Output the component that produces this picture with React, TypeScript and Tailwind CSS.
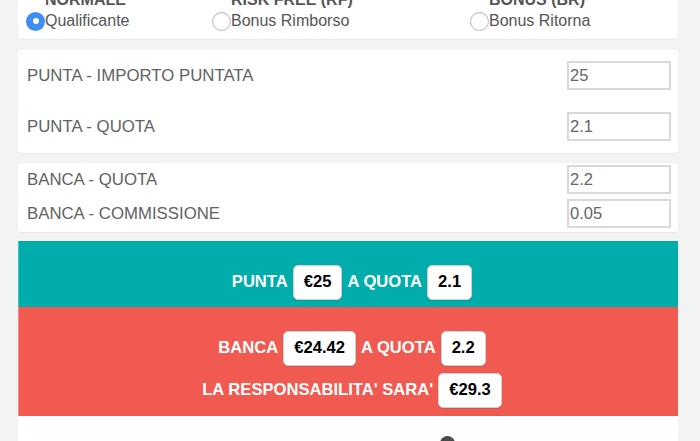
import React from "react";

const FONT = "font-['Liberation_Sans',Arial,sans-serif]";

function Radio({ checked = false }: { checked?: boolean }) {
  if (checked) {
    return (
      <span className="flex h-[19px] w-[19px] shrink-0 items-center justify-center rounded-full bg-[#3d8ef3]">
        <span className="h-[6px] w-[6px] rounded-full bg-white" />
      </span>
    );
  }
  return (
    <span className="h-[19px] w-[19px] shrink-0 rounded-full border border-[#b9b9b9] bg-white shadow-[inset_0_1px_1px_rgba(0,0,0,0.08)]" />
  );
}

const MODES = [
  { title: "NORMALE", label: "Qualificante", checked: true, w: "w-[186px]" },
  { title: "RISK FREE (RF)", label: "Bonus Rimborso", checked: false, w: "w-[258px]" },
  { title: "BONUS (BR)", label: "Bonus Ritorna", checked: false, w: "flex-1" },
];

function Field({ label, value }: { label: string; value: string }) {
  return (
    <div className="flex items-center justify-between">
      <span className="text-[16.8px] leading-[20px] text-[#626262]">{label}</span>
      <input
        readOnly
        value={value}
        className="h-[29px] w-[104px] border-2 border-[#d9d9d9] bg-white pl-[1px] text-[16.5px] text-[#666] outline-none"
      />
    </div>
  );
}

function Badge({ children }: { children: React.ReactNode }) {
  return (
    <span className="inline-flex h-[35px] items-center rounded-[5px] border border-[#c9d0d4] bg-white px-[10px] text-[16.6px] font-bold text-black shadow-[0_1px_1px_rgba(0,0,0,0.1)]">
      {children}
    </span>
  );
}

export default function App() {
  return (
    <div className={`h-[441px] overflow-hidden bg-[#f2f3f3] ${FONT}`}>
      <div className="ml-[18px] w-[660px]">
        {/* mode selection */}
        <div className="-mt-[14px] flex rounded-[3px] bg-white pt-[4px] pb-[8px] shadow-[0_1px_1px_rgba(0,0,0,0.04)]">
          {MODES.map((m) => (
            <div key={m.title} className={`${m.w} pl-[8px]`}>
              <div className="pl-[19px] text-[16px] font-bold leading-[20px] text-[#555]">{m.title}</div>
              <div className="mt-[1px] flex h-[20px] items-center">
                <Radio checked={m.checked} />
                <span className="text-[16px] leading-[20px] text-[#555]">{m.label}</span>
              </div>
            </div>
          ))}
        </div>

        {/* punta */}
        <div className="mt-[11px] flex flex-col gap-[22px] rounded-[3px] bg-white pt-[11px] pb-[12px] pl-[9px] pr-[7px] shadow-[0_1px_1px_rgba(0,0,0,0.04)]">
          <Field label="PUNTA - IMPORTO PUNTATA" value="25" />
          <Field label="PUNTA - QUOTA" value="2.1" />
        </div>

        {/* banca */}
        <div className="mt-[10px] flex flex-col gap-[5px] rounded-[3px] bg-white pt-[2px] pb-[4px] pl-[9px] pr-[7px] shadow-[0_1px_1px_rgba(0,0,0,0.04)]">
          <Field label="BANCA - QUOTA" value="2.2" />
          <Field label="BANCA - COMMISSIONE" value="0.05" />
        </div>

        {/* risultato */}
        <div className="mt-[9px] rounded-t-[3px] bg-white">
          <div className="flex flex-col items-center gap-[7px] border-l border-[#3fc4c4] bg-[#00adab] pt-[24px] pb-[7px] pl-[7px]">
            <div className="flex items-center gap-[5px] text-[16.6px] font-bold text-white">
              <span>PUNTA</span>
              <Badge>€25</Badge>
              <span>A QUOTA</span>
              <Badge>2.1</Badge>
            </div>
          </div>
          <div className="flex flex-col items-center gap-[7px] border-l border-[#f58a82] bg-[#f15a50] pt-[24px] pb-[8px] pl-[7px]">
            <div className="flex items-center gap-[5px] text-[16.6px] font-bold text-white">
              <span>BANCA</span>
              <Badge>€24.42</Badge>
              <span>A QUOTA</span>
              <Badge>2.2</Badge>
            </div>
            <div className="flex items-center gap-[5px] text-[16.6px] font-bold text-white">
              <span>LA RESPONSABILITA' SARA'</span>
              <Badge>€29.3</Badge>
            </div>
          </div>
          <div className="h-[40px] pt-[20px] pl-[422px]">
            <span className="block h-[15px] w-[15px] rounded-full bg-[#4a4a4a]" />
          </div>
        </div>
      </div>
    </div>
  );
}
